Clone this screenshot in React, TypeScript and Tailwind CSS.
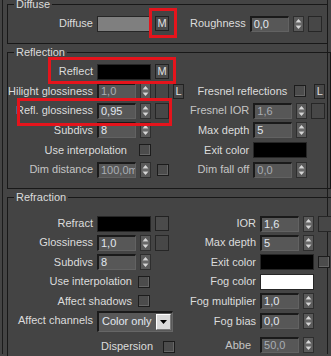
import React from "react";

// V-Ray material rollouts, dark 3ds Max theme

function Num({ v, dim }: { v: string; dim?: boolean }) {
  return (
    <div
      className={`w-[39px] h-[16px] shrink-0 overflow-hidden whitespace-nowrap bg-[#575757] border-t-2 border-l-2 border-r border-b border-t-[#1a1a1a] border-l-[#1a1a1a] border-r-[#626262] border-b-[#626262] pl-[2px] leading-[12px] ${
        dim ? "text-[#a9adb3]" : "text-[#e2e8f0]"
      }`}
    >
      {v}
    </div>
  );
}

function Spin() {
  return (
    <div className="w-[11px] h-[16px] shrink-0 bg-[#5a5a5a] border border-[#2e2e2e] flex items-center justify-center">
      <svg width="9" height="14" viewBox="0 0 9 14">
        <polygon points="1.5,5.5 7.5,5.5 4.5,2" fill="#d6d6d6" />
        <line x1="1" y1="7" x2="8" y2="7" stroke="#777" strokeWidth="1" />
        <polygon points="1.5,8.5 7.5,8.5 4.5,12" fill="#d6d6d6" />
      </svg>
    </div>
  );
}

function Sq() {
  return <div className="w-[14px] h-[16px] shrink-0 bg-[#474747] border border-[#262626]" />;
}

function Chk() {
  return (
    <div className="w-[12px] h-[12px] shrink-0 bg-[#4c4c4c] border border-[#1c1c1c] shadow-[inset_-1px_-1px_0_#666]" />
  );
}

function Swatch({ color }: { color: string }) {
  return <div className={`w-[54px] h-[16px] shrink-0 border border-[#262626] ${color}`} />;
}

function Btn({ t }: { t?: string }) {
  return (
    <div className="w-[14px] h-[15px] shrink-0 bg-[#4b4b4b] border border-[#222] flex items-center justify-center leading-[11px] text-[#e0e0e0]">
      {t}
    </div>
  );
}

function LBtn() {
  return (
    <div className="w-[11px] h-[15px] shrink-0 bg-[#474747] border border-[#222] flex items-center justify-center leading-[11px] text-[#e0e0e0]">
      L
    </div>
  );
}

function Left({ label, dim, children }: { label: string; dim?: boolean; children?: React.ReactNode }) {
  return (
    <div className="flex items-center w-[182px] shrink-0">
      <span className={`w-[85px] text-right whitespace-nowrap ${dim ? "text-[#c4c4c4]" : ""}`}>{label}</span>
      <div className="ml-[4px] flex items-center gap-[4px]">{children}</div>
    </div>
  );
}

function Right({ label, dim, children }: { label: string; dim?: boolean; children?: React.ReactNode }) {
  return (
    <div className="flex items-center flex-1 min-w-0">
      <div className="flex-1 flex justify-end whitespace-nowrap">
        <span className={dim ? "text-[#c4c4c4]" : ""}>{label}</span>
      </div>
      <div className="ml-[4px] w-[77px] flex items-center gap-[4px]">{children}</div>
    </div>
  );
}

function Legend({ t }: { t: string }) {
  return <legend className="ml-[6px] px-[2px] leading-[13px]">{t}</legend>;
}

function Dropdown() {
  return (
    <div className="w-[76px] h-[21px] bg-[#585858] border-t-2 border-l-2 border-r border-b border-t-[#1a1a1a] border-l-[#1a1a1a] border-r-[#666] border-b-[#666] flex items-center justify-between pl-[3px] pr-[1px]">
      <span className="text-[#e2e8f0] whitespace-nowrap">Color only</span>
      <div className="w-[15px] h-[16px] bg-[#d9d9d9] border border-t-white border-l-white border-r-[#7a7a7a] border-b-[#7a7a7a] flex items-center justify-center">
        <svg width="7" height="4" viewBox="0 0 7 4">
          <polygon points="0,0 7,0 3.5,4" fill="#000" />
        </svg>
      </div>
    </div>
  );
}

const row = "flex items-center";

export default function App() {
  return (
    <div className="relative w-[331px] h-[356px] overflow-hidden bg-[#444444] pl-[2px] pr-[3px] font-['Liberation_Sans',Arial,sans-serif] text-[11px] text-[#dcdcdc]">
      <div className="h-full border-x border-[#1b1b1b] pl-[4px] pr-[2px]">
        {/* Diffuse */}
        <fieldset className="-mt-[2px] border border-[#181818] pt-[3px] pb-[10px]">
          <Legend t="Diffuse" />
          <div className={`${row} h-[19px]`}>
            <Left label="Diffuse">
              <Swatch color="bg-[#7f7f7f]" />
              <Btn t="M" />
            </Left>
            <Right label="Roughness">
              <Num v="0,0" />
              <Spin />
              <Sq />
            </Right>
          </div>
        </fieldset>

        {/* Reflection */}
        <fieldset className="mt-[2px] border border-[#181818] pt-[3px] pb-[9px]">
          <Legend t="Reflection" />
          <div className={`${row} h-[19px]`}>
            <Left label="Reflect">
              <Swatch color="bg-black" />
              <Btn t="M" />
            </Left>
          </div>
          <div className={`${row} h-[20px]`}>
            <Left label="Hilight glossiness">
              <Num v="1,0" dim />
              <Spin />
              <Sq />
              <LBtn />
            </Left>
            <div className="flex-1 flex items-center justify-end pr-[5px] whitespace-nowrap">
              <span>Fresnel reflections</span>
              <div className="ml-[7px]">
                <Chk />
              </div>
              <div className="ml-[8px]">
                <LBtn />
              </div>
            </div>
          </div>
          <div className={`${row} h-[19px]`}>
            <Left label="Refl. glossiness">
              <Num v="0,95" />
              <Spin />
              <Sq />
            </Left>
            <Right label="Fresnel IOR" dim>
              <Num v="1,6" dim />
              <Spin />
              <Sq />
            </Right>
          </div>
          <div className={`${row} h-[20px]`}>
            <Left label="Subdivs">
              <Num v="8" />
              <Spin />
            </Left>
            <Right label="Max depth">
              <Num v="5" />
              <Spin />
            </Right>
          </div>
          <div className={`${row} h-[20px]`}>
            <div className="w-[182px] shrink-0">
              <div className="w-[143px] flex items-center justify-end">
                <span className="whitespace-nowrap">Use interpolation</span>
                <div className="ml-[12px]">
                  <Chk />
                </div>
              </div>
            </div>
            <Right label="Exit color">
              <Swatch color="bg-black" />
            </Right>
          </div>
          <div className={`${row} h-[19px]`}>
            <Left label="Dim distance" dim>
              <Num v="100,0mm" dim />
              <Spin />
              <div className="ml-[2px]">
                <Chk />
              </div>
            </Left>
            <Right label="Dim fall off" dim>
              <Num v="0,0" dim />
              <Spin />
            </Right>
          </div>
        </fieldset>

        {/* Refraction */}
        <fieldset className="mt-[2px] border border-[#181818] pt-[10px] pb-[9px]">
          <Legend t="Refraction" />
          <div className={`${row} h-[19px]`}>
            <Left label="Refract">
              <Swatch color="bg-black" />
              <Btn />
            </Left>
            <Right label="IOR">
              <Num v="1,6" />
              <Spin />
              <Sq />
            </Right>
          </div>
          <div className={`${row} h-[19px]`}>
            <Left label="Glossiness">
              <Num v="1,0" />
              <Spin />
              <Sq />
            </Left>
            <Right label="Max depth">
              <Num v="5" />
              <Spin />
            </Right>
          </div>
          <div className={`${row} h-[20px]`}>
            <Left label="Subdivs">
              <Num v="8" />
              <Spin />
            </Left>
            <Right label="Exit color">
              <Swatch color="bg-black" />
              <Chk />
            </Right>
          </div>
          <div className={`${row} h-[19px]`}>
            <div className="w-[182px] shrink-0">
              <div className="w-[142px] flex items-center justify-end">
                <span className="whitespace-nowrap">Use interpolation</span>
                <div className="ml-[6px]">
                  <Chk />
                </div>
              </div>
            </div>
            <Right label="Fog color">
              <Swatch color="bg-white" />
            </Right>
          </div>
          <div className={`${row} h-[20px]`}>
            <div className="w-[182px] shrink-0">
              <div className="w-[142px] flex items-center justify-end">
                <span className="whitespace-nowrap">Affect shadows</span>
                <div className="ml-[6px]">
                  <Chk />
                </div>
              </div>
            </div>
            <Right label="Fog multiplier">
              <Num v="1,0" />
              <Spin />
            </Right>
          </div>
          <div className={`${row} h-[20px]`}>
            <div className="flex items-center w-[182px] shrink-0">
              <span className="w-[85px] text-right whitespace-nowrap -mt-[2px]">Affect channels</span>
              <div className="ml-[4px] flex items-center">
                <Dropdown />
              </div>
            </div>
            <Right label="Fog bias">
              <Num v="0,0" />
              <Spin />
            </Right>
          </div>
          <div className={`${row} h-[28px]`}>
            <div className="w-[182px] shrink-0">
              <div className="w-[167px] flex items-center justify-end pt-[3px]">
                <span className="whitespace-nowrap">Dispersion</span>
                <div className="ml-[10px]">
                  <Chk />
                </div>
              </div>
            </div>
            <div className="flex items-center flex-1 min-w-0">
              <div className="flex-1 flex justify-end whitespace-nowrap pr-[5px]">
                <span className="text-[#c4c4c4]">Abbe</span>
              </div>
              <div className="ml-[4px] w-[77px] flex items-center gap-[4px]">
                <Num v="50,0" dim />
                <Spin />
              </div>
            </div>
          </div>
        </fieldset>
      </div>

      {/* red annotation frames */}
      <div className="absolute left-[149px] top-[8px] w-[28px] h-[30px] border-[3px] border-[#e5141c]" />
      <div className="absolute left-[48px] top-[57px] w-[128px] h-[27px] border-[3px] border-[#e5141c]" />
      <div className="absolute left-[17px] top-[98px] w-[155px] h-[28px] border-[3px] border-[#e5141c]" />
    </div>
  );
}
